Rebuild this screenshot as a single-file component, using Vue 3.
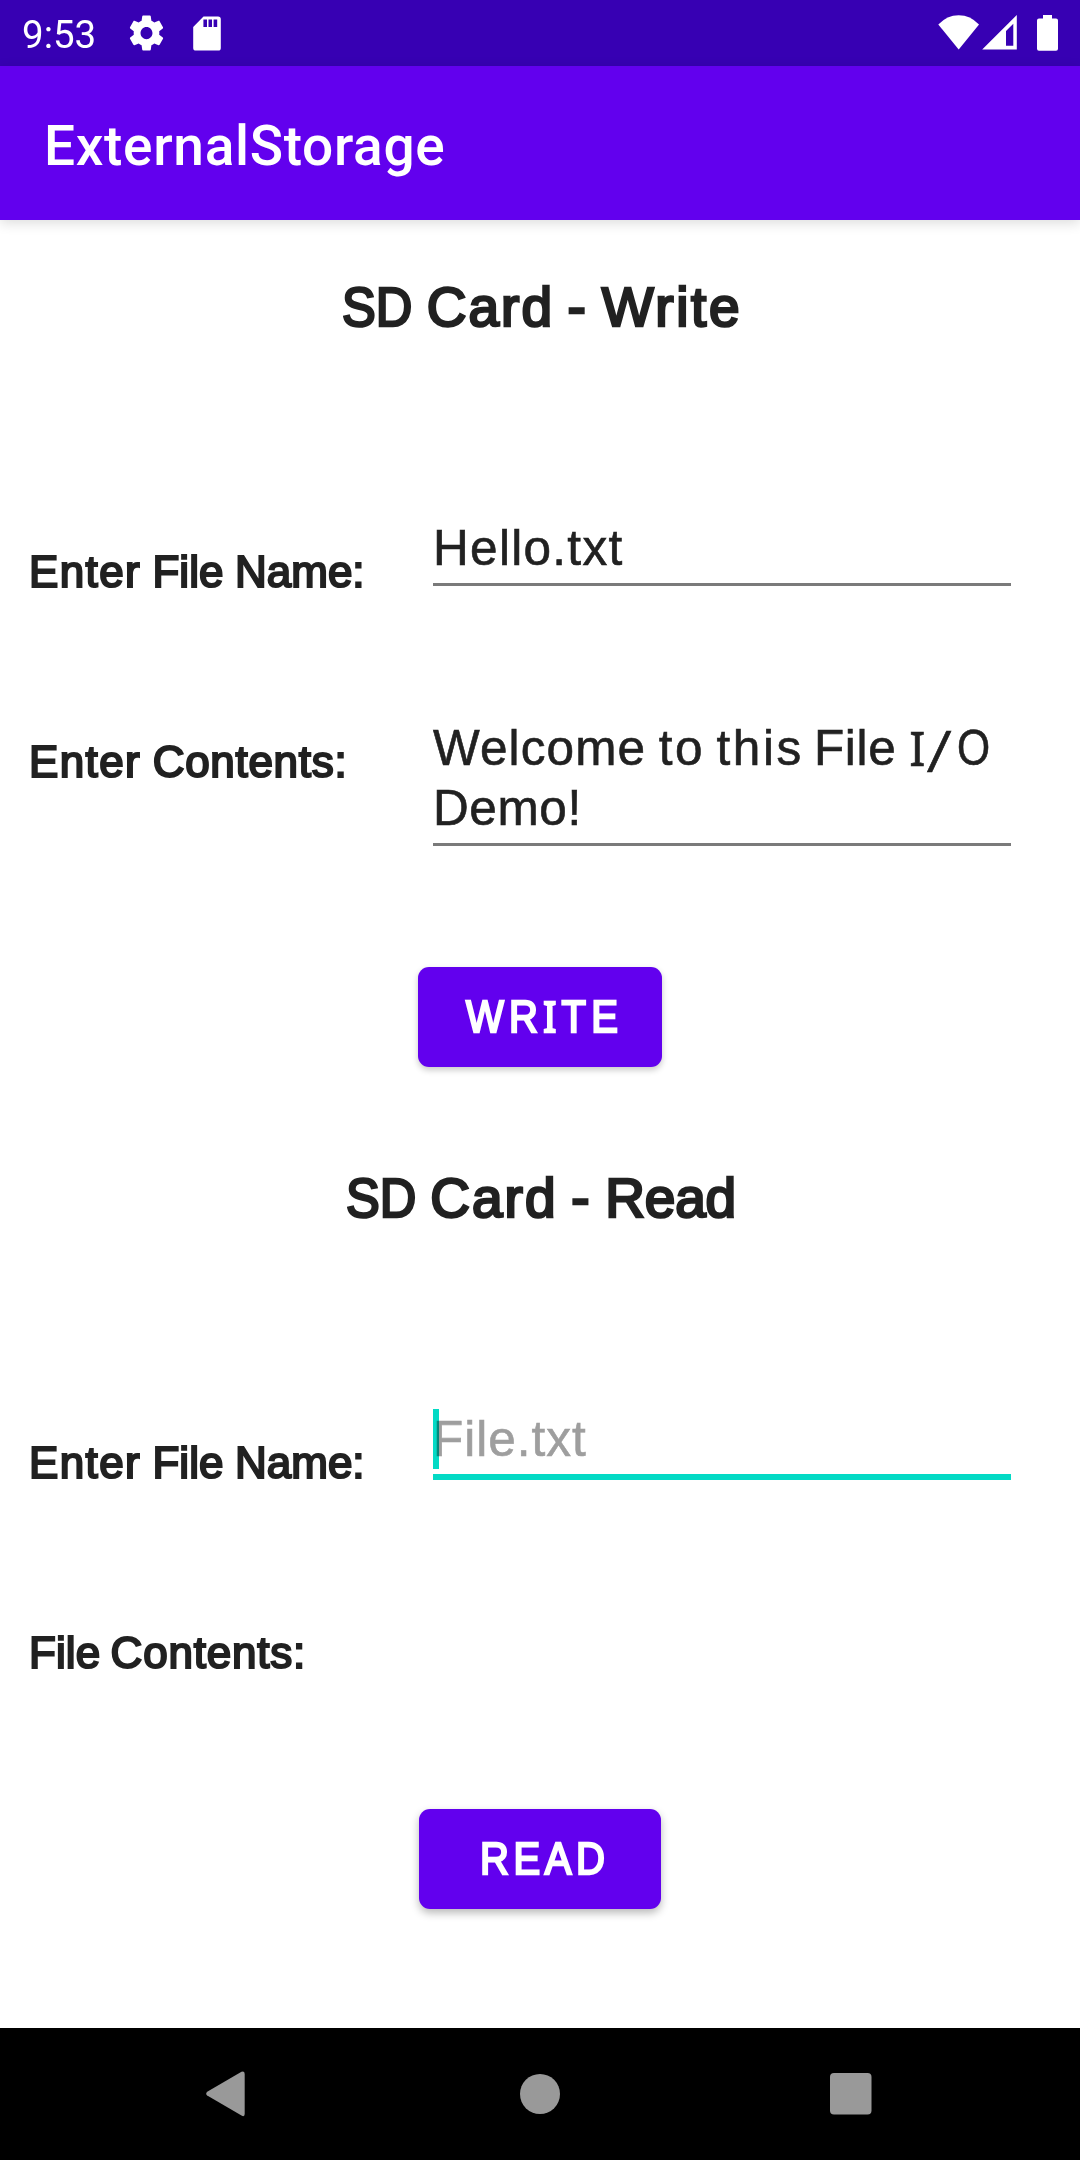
<script setup>
import { h } from 'vue'

// One word per entry: text, advance to the next word, letter-spacing, horizontal scale, extra class
const titles = {
  write: [['SD', 84.6, 0, 0.92], ['Card', 140.7, 2], ['-', 34.3, 0], ['Write', 137, 2.6]],
  read: [['SD', 84.3, 0, 0.92], ['Card', 140.9, 2], ['-', 34.1, 0], ['Read', 130, -0.2]]
}
const labels = {
  name: [['Enter', 123.4, 1.4], ['File', 82.6, 0.1], ['Name:', 130, 0]],
  contents: [['Enter', 123.7, 1.4], ['Contents:', 200, 0.7]],
  output: [['File', 81.6, 0.1], ['Contents:', 200, 0.8]]
}
const message = [
  [['Welcome', 225.8, 1.1], ['to', 57.7, 2.5], ['this', 97.4, 2.6], ['File', 95.4, 0.7], ['I', 15.5, 0, 1, 'slab'], ['/', 32.5, 0, 1, 'slash'], ['O', 32, 0, 0.86]],
  [['Demo!', 150, 0.6]]
]

const Words = (props) =>
  props.items.map(([text, width, spacing, scale = 1, kind = '']) =>
    h('span', {
      class: ['word', kind],
      style: {
        width: width + 'px',
        letterSpacing: spacing + 'px',
        transform: scale === 1 ? undefined : `scaleX(${scale})`
      }
    }, text)
  )
Words.props = ['items']
</script>

<template>
  <div class="screen">
    <header class="status">
      <span class="clock">9:53</span>
      <svg class="gear" width="41" height="42" viewBox="0 0 24 24" preserveAspectRatio="none"><path fill="#fff" d="M19.43 12.98c.04-.32.07-.64.07-.98s-.03-.66-.07-.98l2.11-1.65c.19-.15.24-.42.12-.64l-2-3.46c-.12-.22-.39-.3-.61-.22l-2.49 1c-.52-.4-1.08-.73-1.69-.98l-.38-2.65C14.46 2.18 14.25 2 14 2h-4c-.25 0-.46.18-.49.42l-.38 2.65c-.61.25-1.17.59-1.69.98l-2.49-1c-.23-.09-.49 0-.61.22l-2 3.46c-.13.22-.07.49.12.64l2.11 1.65c-.04.32-.07.65-.07.98s.03.66.07.98l-2.11 1.65c-.19.15-.24.42-.12.64l2 3.46c.12.22.39.3.61.22l2.49-1c.52.4 1.08.73 1.69.98l.38 2.65c.03.24.24.42.49.42h4c.25 0 .46-.18.49-.42l.38-2.65c.61-.25 1.17-.59 1.69-.98l2.49 1c.23.09.49 0 .61-.22l2-3.46c.12-.22.07-.49-.12-.64l-2.11-1.65zM12 15.5c-1.93 0-3.5-1.57-3.5-3.5s1.57-3.5 3.5-3.5 3.5 1.57 3.5 3.5-1.57 3.5-3.5 3.5z"/></svg>
      <svg class="card" width="28" height="35" viewBox="0 0 28 35"><path fill="#fff" fill-rule="evenodd" d="M10.5 .4H25Q27.8 .4 27.8 3.2V32Q27.8 34.6 25.2 34.6H3Q.2 34.6 .2 32V11ZM10.4 3.4V11H14V3.4ZM15.5 3.4V11H19V3.4ZM20.6 3.4V11H24.2V3.4Z"/></svg>
      <svg class="wifi" width="42" height="35" viewBox="0 0 42 35"><path fill="#fff" d="M.3 9.6Q9 .3 20.7 .3T41 9.6L20.7 34.6Z"/></svg>
      <svg class="signal" width="35" height="35" viewBox="0 0 35 35"><path fill="#fff" fill-rule="evenodd" d="M34.8 0V34.6H.2ZM31.3 8.8L24 16V30.8H31.3Z"/></svg>
      <svg class="battery" width="21" height="36" viewBox="0 0 21 36"><path fill="#fff" d="M6 0H15V3.5H19Q21 3.5 21 5.5V33.8Q21 35.8 19 35.8H2Q0 35.8 0 33.8V5.5Q0 3.5 2 3.5H6Z"/></svg>
    </header>
    <div class="appbar">ExternalStorage</div>

    <main>
      <h2 class="t-write"><Words :items="titles.write" /></h2>
      <div class="row first">
        <label class="low"><Words :items="labels.name" /></label>
        <div class="field hello">Hello.txt</div>
      </div>
      <div class="row second">
        <label><Words :items="labels.contents" /></label>
        <div class="field">
          <div v-for="(line, i) in message" :key="i" class="line"><Words :items="line" /></div>
        </div>
      </div>
      <button class="b-write"><span class="narrow">WR<span class="slab">I</span>TE</span></button>

      <h2 class="t-read"><Words :items="titles.read" /></h2>
      <div class="row first">
        <label class="low"><Words :items="labels.name" /></label>
        <div class="field focused"><span class="caret"></span>File.txt</div>
      </div>
      <div class="row last">
        <label><Words :items="labels.output" /></label>
      </div>
      <button class="b-read"><span class="narrow">READ</span></button>
    </main>

    <nav>
      <svg width="40" height="46" viewBox="0 0 40 46"><path fill="#999" d="M1.2 20.8L35.5 .8Q38.7-.6 38.7 3V43Q38.7 46.2 35.5 44.6L1.2 24.6Q-.8 22.7 1.2 20.8Z"/></svg>
      <svg class="home" width="40" height="40" viewBox="0 0 40 40"><circle cx="20" cy="20" r="20" fill="#999"/></svg>
      <svg width="42" height="42" viewBox="0 0 42 42"><rect width="41.5" height="41.5" rx="4" fill="#999"/></svg>
    </nav>
  </div>
</template>

<style>
body { margin: 0; background: #fff; }
</style>

<style scoped>
.screen {
  width: 1080px;
  height: 2160px;
  display: flex;
  flex-direction: column;
  overflow: hidden;
  background: #fff;
  color: #212121;
  font-family: "Liberation Sans", Arial, sans-serif;
}
.status {
  flex: none;
  height: 66px;
  display: flex;
  align-items: flex-start;
  background: #3700b3;
  color: #fff;
}
.status svg { flex: none; margin-top: 16px; }
.clock {
  width: 104px;
  margin-left: 22px;
  font: 400 38.5px/70px Roboto, sans-serif;
}
.status .gear { margin-top: 12.3px; }
.status .card { margin-left: 26px; }
.status .wifi { margin: 15px 0 0 auto; }
.status .signal { margin: 15px 20px 0 2.5px; }
.status .battery { margin: 15px 22px 0 0; }
.appbar {
  flex: none;
  height: 104px;
  padding: 50px 44px 0;
  background: #6200ee;
  color: #fff;
  font: 500 55px/60px Roboto, sans-serif;
  letter-spacing: 0.68px;
  box-shadow: 0 3px 12px rgba(0, 0, 0, 0.14);
}
main {
  flex: 1;
  display: flex;
  flex-direction: column;
  align-items: flex-start;
}
h2 {
  display: flex;
  margin: 0;
  font-size: 55px;
  font-weight: 400;
  line-height: 66px;
  -webkit-text-stroke: 2.6px currentColor;
}
.t-write { margin: 54px 0 0 342.2px; }
.t-read { margin: 98px 0 0 346px; }
.row {
  display: flex;
  align-items: flex-start;
  margin-left: 29px;
}
.row.first { margin-top: 178px; }
.row.second { margin-top: 120px; }
.row.last { margin-top: 138px; }
label {
  display: flex;
  width: 404px;
  margin-top: 18px;
  font-size: 44px;
  line-height: 52px;
  -webkit-text-stroke: 2.1px currentColor;
}
.row.last label { margin-top: 0; }
label.low { margin-top: 28px; }
:deep(.word),
.word {
  display: block;
  flex: none;
  white-space: pre;
  transform-origin: left center;
}
.slab, :deep(.slab) { font-family: "Noto Sans", sans-serif; font-size: 0.963em; }
:deep(.slash) { font-family: "DejaVu Sans Mono", monospace; font-size: 1.01em; padding-top: 2px; }
.field {
  position: relative;
  width: 578px;
  padding-bottom: 5px;
  border-bottom: 3px solid #7a7a7a;
  font-size: 49.5px;
  line-height: 60px;
  letter-spacing: 1px;
  -webkit-text-stroke: 0.6px currentColor;
}
.field.hello { letter-spacing: 1.3px; }
.line { display: flex; height: 60px; }
.focused {
  border-bottom: 6px solid #03dac5;
  color: #9e9e9e;
}
.caret {
  position: absolute;
  left: 0;
  top: 0;
  width: 6px;
  height: 60px;
  background: #03dac5;
  mix-blend-mode: multiply;
}
button {
  height: 100px;
  padding: 0;
  border: 0;
  border-radius: 11px;
  background: #6200ee;
  color: #fff;
  font: 400 44px/52px "Liberation Sans", Arial, sans-serif;
  text-align: left;
  -webkit-text-stroke: 2.3px currentColor;
}
.b-write {
  width: 244px;
  margin: 121px 0 0 418px;
  padding-left: 47.8px;
  letter-spacing: 5.8px;
  box-shadow: 0 3px 6px rgba(0, 0, 0, 0.22);
}
button .slab { line-height: 0; }
.b-read {
  width: 242px;
  margin: 130px 0 0 419px;
  padding-left: 60.5px;
  letter-spacing: 5px;
  box-shadow: 0 4px 8px rgba(0, 0, 0, 0.28);
}
.narrow {
  display: block;
  transform: scaleX(0.91);
  transform-origin: left center;
}
nav {
  flex: none;
  height: 132px;
  display: flex;
  align-items: center;
  box-sizing: border-box;
  padding: 0 0 0 206px;
  background: #000;
}
.home { margin: 0 270px 0 274px; }
</style>
